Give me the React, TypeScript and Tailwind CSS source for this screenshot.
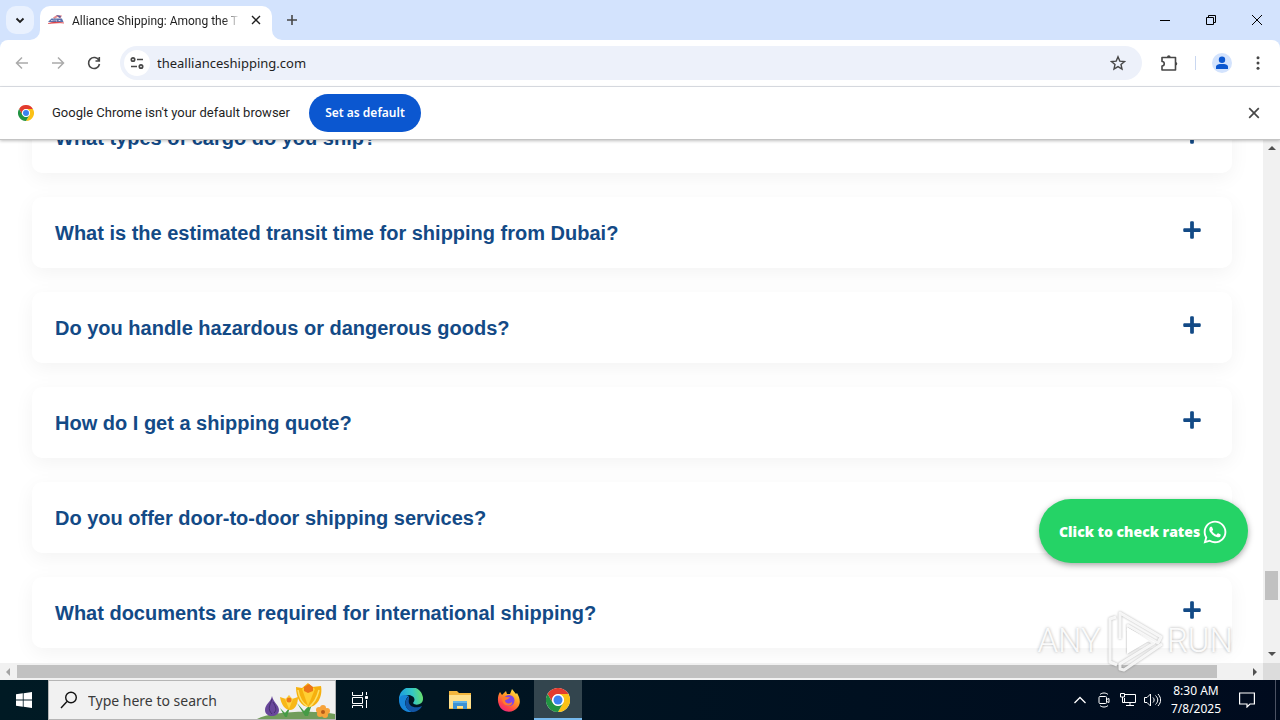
import React from 'react';
import { FaPlus, FaWhatsapp } from 'react-icons/fa';

const questions = [
  'What types of cargo do you ship?',
  'What is the estimated transit time for shipping from Dubai?',
  'Do you handle hazardous or dangerous goods?',
  'How do I get a shipping quote?',
  'Do you offer door-to-door shipping services?',
  'What documents are required for international shipping?',
];

interface IconProps {
  className?: string;
}

const ChromeLogo: React.FC<IconProps> = ({ className }) => (
  <svg className={className} viewBox="0 0 48 48" aria-hidden="true">
    <circle cx="24" cy="24" r="24" fill="#fff" />
    <path d="M3.2 12A24 24 0 0 1 44.8 12H24a12 12 0 0 0-10.4 18z" fill="#e33b2e" />
    <path d="M44.8 12A24 24 0 0 1 24 48l10.4-18A12 12 0 0 0 24 12z" fill="#fbc116" />
    <path d="M24 48A24 24 0 0 1 3.2 12l10.4 18a12 12 0 0 0 20.8 0z" fill="#229342" />
    <circle cx="24" cy="24" r="11.5" fill="#fff" />
    <circle cx="24" cy="24" r="9" fill="#3b82f0" />
  </svg>
);

const CloseIcon: React.FC<IconProps> = ({ className }) => (
  <svg className={className} viewBox="0 0 10 10" fill="none" stroke="currentColor" aria-hidden="true">
    <path d="M1 1l8 8M9 1L1 9" strokeWidth="1.4" />
  </svg>
);

const TabStrip = () => (
  <div className="flex h-10 bg-[#d3e3fd] pl-1.5">
    <button aria-label="Search tabs" className="mt-1.5 flex h-7 w-7 items-center justify-center rounded-[10px] bg-[#e9f1fe] text-[#1f1f1f]">
      <svg className="h-2.5 w-2.5" viewBox="0 0 10 10" fill="none" stroke="currentColor" strokeWidth="1.8">
        <path d="M1.5 3.5L5 7l3.500-3.500" />
      </svg>
    </button>
    <div className="relative ml-1.5 mt-1.5 flex w-[232px] items-center rounded-t-[10px] bg-white pl-2 pr-2.5 text-[#1f1f1f]">
      {/* Flared tab feet */}
      <svg className="absolute -left-2.5 bottom-0 h-2.5 w-2.5" viewBox="0 0 10 10" fill="#fff"><path d="M10 0v10H0A10 10 0 0 0 10 0z" /></svg>
      <svg className="absolute -right-2.5 bottom-0 h-2.5 w-2.5" viewBox="0 0 10 10" fill="#fff"><path d="M0 0v10h10A10 10 0 0 1 0 0z" /></svg>
      <svg className="mb-1.5 h-4 w-4 shrink-0" viewBox="0 0 16 16" aria-hidden="true">
        <path d="M5 5.500L9 3l5 .5-1.500 3-3-1.500-3 2z" fill="#e78a8d" />
        <path d="M8 3l5 1-1 2-2-1.500z" fill="#4b5fa5" />
        <path d="M2 8l1.500-1.500H14L15.500 10H0z" fill="#5a70ac" />
        <path d="M3 9l1-1 .6 1M6 7.500V9M8 7.500V9h1M11 9V8l1 1V8" fill="none" stroke="#fff" strokeWidth=".6" />
        <path d="M0 11.500c5-2 10-1.500 16-.5-6-.3-11 0-16 .5z" fill="#d6262d" stroke="#d6262d" strokeWidth=".4" />
      </svg>
      <span className="mb-1 ml-2 w-[168px] whitespace-nowrap font-['Roboto',sans-serif] text-xs [mask-image:linear-gradient(to_right,#000_90%,transparent)]">Alliance Shipping: Among the T</span>
      <button aria-label="Close tab" className="mb-1.5 ml-auto flex h-3 w-3 items-center justify-center">
        <CloseIcon className="h-2.5 w-2.5" />
      </button>
    </div>
    <button aria-label="New tab" className="ml-3 flex w-4 items-center justify-center text-[#474747]">
      <svg className="h-3 w-3" viewBox="0 0 12 12" stroke="currentColor" strokeWidth="1.6"><path d="M6 1v10M1 6h10" /></svg>
    </button>
    <div className="ml-auto flex items-center text-black">
      <button aria-label="Minimize" className="flex h-10 w-[46px] items-center justify-center">
        <svg className="h-2.5 w-2.5" viewBox="0 0 10 10" stroke="currentColor"><path d="M0 5.500h10" /></svg>
      </button>
      <button aria-label="Restore" className="flex h-10 w-[46px] items-center justify-center">
        <svg className="h-2.5 w-2.5" viewBox="0 0 10 10" fill="none" stroke="currentColor"><path d="M.5 2.500h7v7h-7zM2.500 2.500v-2h7v7h-2" /></svg>
      </button>
      <button aria-label="Close" className="flex h-10 w-[46px] items-center justify-center">
        <svg className="h-2.5 w-2.5" viewBox="0 0 10 10" stroke="currentColor"><path d="M0 0l10 10M10 0L0 10" /></svg>
      </button>
    </div>
  </div>
);

const Toolbar = () => (
  <div className="bg-[#d3e3fd]">
    <div className="flex h-[47px] items-center rounded-t-lg border-b border-[#dfe2e8] bg-white px-3.5 text-[#474747]">
      <button aria-label="Back" className="flex h-4 w-4 items-center justify-center text-[#ababab]">
        <svg className="h-4 w-4" viewBox="0 0 16 16" fill="none" stroke="currentColor" strokeWidth="1.5"><path d="M14 8H3M8 2.500L2.500 8 8 13.500" /></svg>
      </button>
      <button aria-label="Forward" className="ml-5 flex h-4 w-4 items-center justify-center text-[#ababab]">
        <svg className="h-4 w-4" viewBox="0 0 16 16" fill="none" stroke="currentColor" strokeWidth="1.5"><path d="M2 8h11M8 2.500L13.500 8 8 13.500" /></svg>
      </button>
      <button aria-label="Reload" className="ml-5 flex h-4 w-4 items-center justify-center">
        <svg className="h-4 w-4" viewBox="0 0 16 16" fill="none" stroke="currentColor" strokeWidth="1.600"><path d="M13 5.500A5.500 5.500 0 1 0 13.500 9M13.300 2v4H9.500" /></svg>
      </button>
      <div className="ml-[18px] flex h-[34px] flex-1 items-center rounded-full bg-[#edf1fa] pl-1 pr-4">
        <button aria-label="View site information" className="flex h-[26px] w-[26px] items-center justify-center rounded-full bg-white">
          <svg className="h-3.5 w-3.5" viewBox="0 0 14 14" fill="none" stroke="currentColor" strokeWidth="1.700">
            <circle cx="3" cy="3.500" r="1.700" /><path d="M7 3.500h6M1 10.500h6" /><circle cx="11" cy="10.500" r="1.700" />
          </svg>
        </button>
        <input aria-label="Address" defaultValue="theallianceshipping.com" className="ml-[7px] min-w-0 flex-1 bg-transparent pt-0.5 text-[13px] text-[#1f1f1f] outline-none" />
        <button aria-label="Bookmark this tab">
          <svg className="h-4 w-4" viewBox="0 0 16 16" fill="none" stroke="currentColor" strokeWidth="1.400"><path d="M8 1.800l1.800 4.300 4.700.4-3.500 3 1 4.600-4-2.500-4 2.500 1-4.600-3.500-3 4.700-.4z" /></svg>
        </button>
      </div>
      <button aria-label="Extensions" className="ml-[18px]">
        <svg className="h-[18px] w-[18px]" viewBox="0 0 18 18" fill="none" stroke="currentColor" strokeWidth="1.600">
          <path d="M2 3.500h13.500V16H2v-4c3 0 3-4.500 0-4.500z" strokeLinejoin="round" />
          <path d="M7 3a1.800 1.800 0 0 1 3.600 0zM15.500 8a1.800 1.800 0 0 1 0 3.600z" fill="currentColor" stroke="none" />
        </svg>
      </button>
      <span className="ml-[17px] h-3.5 w-px bg-[#c9d7f0]" />
      <button aria-label="Profile" className="ml-4 flex h-5 w-5 items-center justify-center rounded-full bg-[#d3e3fd] text-[#0b57d0]">
        <svg className="h-3.5 w-3.5" viewBox="0 0 14 14" fill="currentColor"><circle cx="7" cy="3.800" r="3.200" /><path d="M1 13v-2.200C1 8.500 4 8 7 8s6 .5 6 2.800V13z" /></svg>
      </button>
      <button aria-label="Menu" className="ml-[18px]">
        <svg className="h-4 w-4" viewBox="0 0 16 16" fill="currentColor"><circle cx="8" cy="2.800" r="1.500" /><circle cx="8" cy="8" r="1.500" /><circle cx="8" cy="13.200" r="1.500" /></svg>
      </button>
    </div>
  </div>
);

const InfoBar = () => (
  <div className="relative z-10 flex h-[53px] items-center border-b border-[#c4c4c4] bg-white pl-[18px] pr-5 text-xs text-[#1f1f1f] shadow-[0_1px_3px_rgba(0,0,0,0.25)]">
    <ChromeLogo className="h-4 w-4" />
    <span className="ml-[18px] w-[241px] whitespace-nowrap font-['Roboto',sans-serif] text-[13px]">Google Chrome isn't your default browser</span>
    <button className="ml-4 h-[38px] w-28 rounded-full bg-[#0b57d0] font-semibold text-white">Set as default</button>
    <button aria-label="Dismiss" className="ml-auto text-[#474747]">
      <CloseIcon className="h-3 w-3" />
    </button>
  </div>
);

const Watermark = () => (
  <div className="pointer-events-none absolute bottom-2 right-[47px] flex h-[62px] items-center font-['Liberation_Sans_Narrow','Roboto',sans-serif] text-[33px] font-light text-white/90 [text-shadow:0_0_3px_rgba(0,0,0,0.35)]">
    <span>ANY</span>
    <svg className="ml-1.5 h-[62px] w-[58px] drop-shadow-[0_0_1px_rgba(0,0,0,0.35)]" viewBox="0 0 58 62" fill="none" stroke="#fff" strokeOpacity=".85" strokeWidth="3" strokeLinejoin="round">
      <path d="M9 7L3 9v43l7 3M13 29V3l41 24-3 6-31-18" />
      <path d="M20 17v27l22-13z" fill="#fff" stroke="none" />
      <path d="M20 19l27 14-34 21v5l4 1 38-26" />
    </svg>
    <span className="ml-0.5">RUN</span>
  </div>
);

const Page = () => (
  <main className="relative min-w-0 flex-1 overflow-hidden bg-white">
    <div className="-mt-[38px] flex flex-col gap-6 pl-8 pr-[31px]">
      {questions.map(question => (
        <button
          key={question}
          className="flex h-[71px] shrink-0 items-center justify-between rounded-[10px] bg-white pl-[23px] pr-[30px] text-left text-[#134a86] shadow-[0_5px_20px_rgba(0,0,0,0.05)]"
        >
          <span className="font-['Liberation_Sans',sans-serif] text-xl font-bold">{question}</span>
          <FaPlus className="mb-1.5 h-5 w-5" />
        </button>
      ))}
      {/* Next card is still below the fold, only its shadow reaches up */}
      <div className="h-[71px] shrink-0 rounded-[10px] bg-white shadow-[0_5px_20px_rgba(0,0,0,0.05)]" />
    </div>
    <a
      href="#rates"
      className="absolute bottom-[100px] right-[15px] flex h-16 w-[209px] items-center gap-0.5 rounded-full bg-[#25d366] pl-5 pt-0.5 font-['Open_Sans',sans-serif] text-sm font-extrabold text-white shadow-[0_2px_6px_rgba(0,0,0,0.35)]"
    >
      <span className="whitespace-nowrap">Click to check rates</span>
      <FaWhatsapp className="h-[26px] w-[26px] shrink-0" />
    </a>
  </main>
);

const VerticalScrollbar = () => (
  <div className="flex w-[17px] flex-col items-center bg-[#f1f1f1]">
    <svg className="mt-1 h-2 w-2" viewBox="0 0 8 8" fill="#505050"><path d="M0 6l4-4 4 4z" /></svg>
    <div className="mb-[50px] mt-auto h-[29px] w-[13px] bg-[#c1c1c1]" />
    <svg className="mb-[5px] h-2 w-2" viewBox="0 0 8 8" fill="#505050"><path d="M0 2l4 4 4-4z" /></svg>
  </div>
);

const HorizontalScrollbar = () => (
  <div className="flex h-[17px] items-center bg-[#f1f1f1]">
    <svg className="ml-1 h-2 w-2" viewBox="0 0 8 8" fill="#a3a3a3"><path d="M6 0L2 4l4 4z" /></svg>
    <div className="ml-[5px] mr-[34px] h-[13px] flex-1 bg-[#c1c1c1]" />
    <svg className="mr-1 h-2 w-2" viewBox="0 0 8 8" fill="#505050"><path d="M2 0l4 4-4 4z" /></svg>
    <div className="h-full w-[17px] bg-[#dcdcdc]" />
  </div>
);

const Flowers = () => (
  <svg className="ml-auto h-[38px] w-[78px] shrink-0" viewBox="0 0 78 38" aria-hidden="true">
    <path d="M0 38c14-8 58-9 78-5v5z" fill="#719d5b" />
    <path d="M28 36l-5-9 5 5 5-6-3 10zM48 35l-8-13 7 8 9-10-5 15z" fill="#459b45" />
    <path d="M15 15c1 6 7 9 7 14 0 8-14 8-14 0 0-6 6-8 7-14z" fill="#69479b" />
    <path d="M15 18c-2 6-5 10 0 15M16 21c3 5 4 8 1 11" fill="none" stroke="#45306f" />
    <path d="M23 16l6 2 3-4 3 4 6-2c0 7-3 13-8 13s-9-6-10-13z" fill="#f8b817" />
    <path d="M28 18l4 10 4-10-4-3z" fill="#ffd640" />
    <circle cx="32" cy="19" r="2.500" fill="#ee7918" />
    <path d="M39 6l6 1 6-5 4 4 9-1c2 11-4 21-12 21S39 17 39 6z" fill="#f6b00e" />
    <path d="M45 8l6 17 7-17-6-5z" fill="#ffcf33" />
    <path d="M47 6l5-3 4 3v4l-5 2-4-2z" fill="#ec7518" />
    <path d="M41 9c1 8 4 13 10 17M62 9c-2 8-6 14-10 17" fill="none" stroke="#fde063" strokeWidth="1.500" />
    <g fill="#f7a33a"><circle cx="66" cy="27" r="3" /><circle cx="70" cy="30" r="3" /><circle cx="68" cy="34" r="3" /><circle cx="63" cy="33" r="3" /><circle cx="62" cy="29" r="3" /><circle cx="66" cy="31" r="4" /></g>
    <circle cx="66" cy="31" r="2" fill="#b65b18" />
  </svg>
);

const EdgeLogo = () => (
  <svg className="h-6 w-6" viewBox="0 0 24 24" aria-hidden="true">
    <defs>
      <linearGradient id="edge" x1="0" y1="0.3" x2="1" y2="0.2">
        <stop offset="0" stopColor="#1b9de2" /><stop offset=".55" stopColor="#35c8c4" /><stop offset="1" stopColor="#6be064" />
      </linearGradient>
    </defs>
    <path d="M0 11A12 12 0 0 1 24 11c0 6-8 7-10 4 4-5-1-8-5-8-5 0-9 4-9 9z" fill="url(#edge)" />
    <path d="M0 11c1-4 6-5 10-3-5 3-5 11 0 14l3 2C5 25 0 19 0 12z" fill="#1785d8" />
    <path d="M10 8c-6 5-4 14 3 16 4 0 8-2 10-6-6 3-15 1-13-7z" fill="#1255a4" />
  </svg>
);

const FolderIcon = () => (
  <svg className="h-5 w-[22px]" viewBox="0 0 22 20" aria-hidden="true">
    <path d="M0 1h8l2 2h12v16H0z" fill="#f3b63d" />
    <path d="M0 5h22v13H0z" fill="#ffe08c" />
    <path d="M4 11h14v8h-4v-3H8v3H4z" fill="#3c91d4" />
    <path d="M4 11h14v2H4z" fill="#62b3e8" />
  </svg>
);

const FirefoxLogo = () => (
  <svg className="h-6 w-6" viewBox="0 0 24 24" aria-hidden="true">
    <defs>
      <linearGradient id="fox" x1=".8" y1="0" x2=".2" y2="1">
        <stop offset="0" stopColor="#ffe947" /><stop offset=".4" stopColor="#ff9a24" /><stop offset=".75" stopColor="#ff4548" /><stop offset="1" stopColor="#e8208b" />
      </linearGradient>
    </defs>
    <path d="M3 4l2 3 4-4 1 3 3 0 2-5 4 5 1-1c3 5 4 10 1 14-5 7-16 6-19-2C0 12 1 7 3 4z" fill="url(#fox)" />
    <circle cx="12" cy="12.500" r="5.500" fill="#8045e5" />
    <path d="M5 10c3-3 5 0 8-1-1 3-5 2-5 4 1 3 5 3 7 1 1 5-10 6-10-4z" fill="#ff7a2d" />
  </svg>
);

const Taskbar = () => (
  <footer className="flex h-10 bg-gradient-to-r from-[#001a24] to-[#000b1e] text-white">
    <button aria-label="Start" className="flex w-12 items-center justify-center">
      <svg className="h-4 w-4" viewBox="0 0 16 16" fill="#fff"><path d="M0 2.300L6.800 1.300V7.600H0zM7.600 1.200L16 0v7.600H7.600zM0 8.400h6.800v6.300L0 13.700zM7.600 8.400H16V16l-8.400-1.200z" /></svg>
    </button>
    <label className="flex w-72 items-center border border-[#b5b5b5] bg-[#f1f1f1] pl-[11px]">
      <svg className="h-[18px] w-[18px] shrink-0" viewBox="0 0 18 18" fill="none" stroke="#111" strokeWidth="1.400"><circle cx="11" cy="6.500" r="5.300" /><path d="M7 10.500L1 17" /></svg>
      <input type="text" aria-label="Search" placeholder="Type here to search" className="ml-2.5 h-full w-[150px] min-w-0 bg-transparent text-sm outline-none placeholder:text-[#3a3a3a]" />
      <Flowers />
    </label>
    <button aria-label="Task view" className="flex w-12 items-center justify-center">
      <svg className="h-4 w-4" viewBox="0 0 16 16" fill="none" stroke="currentColor"><path d="M.5 0v3.500h10V0M.5 5.500h10v6H.5zM.5 16v-2.500h10V16M14.500 0v3M14.500 8v8" /><path d="M13.500 4.500h2v2h-2z" fill="currentColor" /></svg>
    </button>
    <button aria-label="Microsoft Edge" className="ml-[3px] flex w-12 items-center justify-center"><EdgeLogo /></button>
    <button aria-label="File Explorer" className="ml-px flex w-12 items-center justify-center"><FolderIcon /></button>
    <button aria-label="Firefox" className="ml-px flex w-12 items-center justify-center"><FirefoxLogo /></button>
    <button aria-label="Google Chrome" className="ml-px flex w-12 items-center justify-center border-b-2 border-[#76b9ed] bg-[#33454e] pt-0.5"><ChromeLogo className="h-6 w-6" /></button>
    <div className="ml-auto flex items-center">
      <button aria-label="Show hidden icons">
        <svg className="h-3 w-3" viewBox="0 0 12 12" fill="none" stroke="currentColor" strokeWidth="1.300"><path d="M.5 9L6 3.500 11.500 9" /></svg>
      </button>
      <svg className="ml-3 h-4 w-3" viewBox="0 0 12 16" fill="none" stroke="currentColor"><path d="M2 2.500c2-2 6-2 8 0M2 13.500c2 2 6 2 8 0M8.500 7.500l2.500-1v4l-2.500-1" /><rect x="1" y="4.500" width="7.500" height="7" rx="1" /></svg>
      <svg className="ml-2.5 h-4 w-4" viewBox="0 0 16 16" fill="none" stroke="currentColor"><path d="M5 2.500h10.500v8H4.500V6M10 10.500v3M6 13.500h8M.5 1.500h4V5h-4zM2.500 5v5.500H5" /></svg>
      <svg className="ml-2 h-4 w-[17px]" viewBox="0 0 17 16" fill="none" stroke="currentColor"><path d="M.5 5.500H3l3.500-3.500v12L3 10.500H.5zM9 5.500c1.500 1.500 1.500 3.500 0 5M11.500 3.500c3 3 3 6 0 9M14 2c3.500 4 3.500 8 0 12" /></svg>
      <div className="w-[70px] text-center text-xs leading-[18px]">
        <div>8:30 AM</div>
        <div>7/8/2025</div>
      </div>
      <button aria-label="Notifications" className="ml-2 mr-5">
        <svg className="h-4 w-4" viewBox="0 0 16 16" fill="none" stroke="currentColor" strokeWidth="1.200"><path d="M.6 1h14.800v11H11l-3 3v-3H.6z" /></svg>
      </button>
      <span className="mr-1 h-10 w-px bg-[#4b5263]" />
    </div>
  </footer>
);

const App: React.FC = () => {
  return (
    <div className="flex h-screen flex-col overflow-hidden bg-white font-['Noto_Sans',sans-serif]">
      <TabStrip />
      <Toolbar />
      <InfoBar />
      <div className="relative flex min-h-0 flex-1 flex-col">
        <div className="flex min-h-0 flex-1">
          <Page />
          <VerticalScrollbar />
        </div>
        <HorizontalScrollbar />
        <Watermark />
      </div>
      <Taskbar />
    </div>
  );
};

export default App;
